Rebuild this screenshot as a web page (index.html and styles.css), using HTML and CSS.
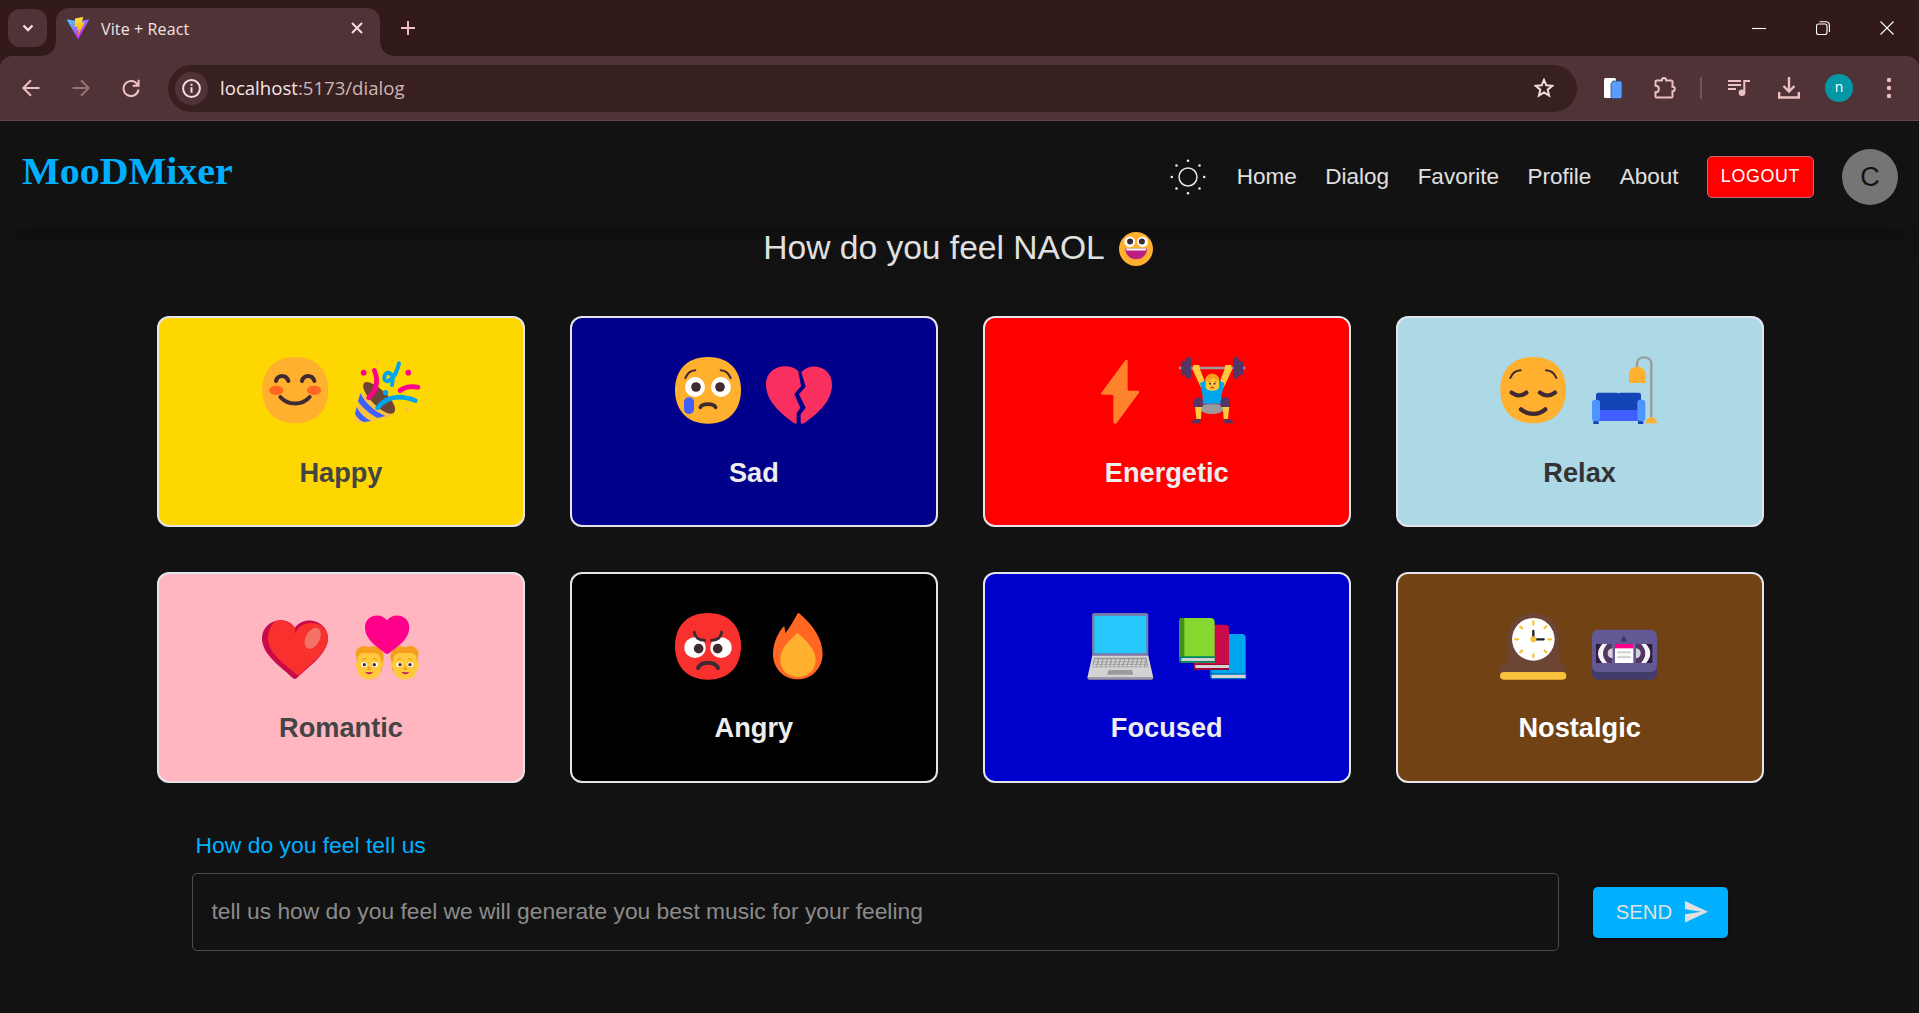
FILE: index.html
```html
<!DOCTYPE html>
<html lang="en">
<head>
<meta charset="utf-8">
<title>Vite + React</title>
<link rel="stylesheet" href="styles.css">
</head>
<body>
<div class="tabstrip">
  <button class="tab-search" aria-label="Search tabs"><svg width="12" height="8" viewBox="0 0 12 8"><path d="M1.5 1.5 6 6l4.500-4.500" class="ln light thick"/></svg></button>
  <div class="tab">
    <svg class="favicon" width="22" height="22" viewBox="0 0 256 257">
      <defs>
        <linearGradient id="va" x1="-.8%" x2="57.600%" y1="7.700%" y2="78.400%"><stop offset="0" stop-color="#41d1ff"/><stop offset="1" stop-color="#bd34fe"/></linearGradient>
        <linearGradient id="vb" x1="43.400%" x2="50.300%" y1="2.200%" y2="89%"><stop offset="0" stop-color="#ffea83"/><stop offset=".08" stop-color="#ffdd35"/><stop offset="1" stop-color="#ffa800"/></linearGradient>
      </defs>
      <path fill="url(#va)" d="M255.153 37.938 134.897 252.976c-2.483 4.440-8.862 4.466-11.382.048L.875 37.958c-2.746-4.814 1.371-10.646 6.827-9.670l120.385 21.517a6.537 6.537 0 0 0 2.322-.004l117.867-21.483c5.438-.991 9.574 4.796 6.877 9.620Z"/>
      <path fill="url(#vb)" d="M185.432.063 96.440 17.501a3.268 3.268 0 0 0-2.634 3.014l-5.474 92.456a3.268 3.268 0 0 0 3.997 3.378l24.777-5.718c2.318-.535 4.413 1.507 3.936 3.838l-7.361 36.047c-.495 2.426 1.782 4.500 4.151 3.780l15.304-4.649c2.372-.72 4.652 1.360 4.150 3.788l-11.698 56.621c-.732 3.542 3.979 5.473 5.943 2.437l1.313-2.028 72.516-144.720c1.215-2.423-.88-5.186-3.540-4.672l-25.505 4.922c-2.396.462-4.435-1.770-3.759-4.114l16.646-57.705c.677-2.350-1.370-4.583-3.769-4.113Z"/>
    </svg>
    <span class="tab-title">Vite + React</span>
    <svg class="tab-close" width="12" height="12" viewBox="0 0 12 12"><path d="M1 1l10 10M11 1 1 11" class="ln light"/></svg>
  </div>
  <svg class="new-tab" width="16" height="16" viewBox="0 0 16 16"><path d="M8 1v14M1 8h14" class="ln pink"/></svg>
  <div class="window-controls">
    <svg width="14" height="14" viewBox="0 0 14 14"><path d="M0 7.500h14" class="ln hair"/></svg>
    <svg width="14" height="14" viewBox="0 0 14 14"><rect x=".5" y="3" width="10.500" height="10.500" rx="2" class="ln hair"/><path d="M3.500.7H10a3.400 3.400 0 0 1 3.400 3.400V11" class="ln hair"/></svg>
    <svg width="14" height="14" viewBox="0 0 14 14"><path d="M.5.5l13 13M13.500.5l-13 13" class="ln hair"/></svg>
  </div>
</div>

<div class="toolbar">
  <div class="slot"><svg width="18" height="18" viewBox="0 0 18 18"><path d="M17.500 9H1.500M9 1.300 1.300 9 9 16.700" class="ln pink"/></svg></div>
  <div class="slot dim"><svg width="18" height="18" viewBox="0 0 18 18"><path d="M.5 9h16M9 1.300 16.700 9 9 16.700" class="ln pink"/></svg></div>
  <div class="slot"><svg width="18" height="18" viewBox="0 0 18 18"><path d="M15.700 6A7.500 7.500 0 1 0 16.500 10.500M16.600.8V6.700H10.700" class="ln pink"/></svg></div>
  <div class="omnibox">
    <div class="site-info"><svg width="19" height="19" viewBox="0 0 19 19"><circle cx="9.500" cy="9.500" r="8.400" class="ln light"/><path d="M9.500 8.300v5.500M9.500 4.800v2" class="ln light"/></svg></div>
    <div class="url">localhost<span>:5173/dialog</span></div>
    <svg class="star" width="20" height="20" viewBox="0 0 20 20"><path d="M10 1.800l2.300 5.500 6 .5-4.600 3.900 1.400 5.900L10 14.500l-5.100 3.100 1.400-5.900-4.600-3.900 6-.5z" class="ln light"/></svg>
  </div>
  <div class="slot"><svg width="20" height="22" viewBox="0 0 20 22"><rect x="1" y="1" width="12" height="20" rx="1.500" fill="#fff"/><path d="M8 6.500 10 4h8l1 1.500V20l-1 1.500H9L8 20z" fill="#5c9dfb" stroke="#2b4a7c" stroke-width=".8"/></svg></div>
  <div class="slot"><svg class="puzzle" width="24" height="24" viewBox="0 0 24 24"><path d="M3.500 4.500h5.300c0-3.500 4.400-3.500 4.400 0h5.300q1 0 1 1v5.300c3 0 3 4.400 0 4.400v5.300q0 1-1 1h-15q-1 0-1-1v-4.300c4.500 0 4.500-6.400 0-6.400V5.500q0-1 1-1z" class="ln pink"/></svg></div>
  <div class="divider"></div>
  <div class="slot"><svg width="22" height="18" viewBox="0 0 22 18"><path d="M0 2h13M0 6h13M0 10h8" class="ln pink"/><circle cx="14" cy="13.800" r="3.300" fill="#edc1c2"/><path d="M16.300 14V2H22" class="ln pink"/></svg></div>
  <div class="slot"><svg width="22" height="24" viewBox="0 0 22 24"><path d="M11 1v14M5.500 10l5.500 5.500 5.500-5.500M1.200 16v5.500h19.600V16" class="ln pink thick"/></svg></div>
  <div class="slot"><span class="account">n</span></div>
  <div class="slot"><svg width="6" height="22" viewBox="0 0 6 22"><g fill="#edc1c2"><circle cx="3" cy="3" r="2.200"/><circle cx="3" cy="11" r="2.200"/><circle cx="3" cy="19" r="2.200"/></g></svg></div>
</div>

<div class="app">
  <header class="header">
    <div class="brand">MooDMixer</div>
    <nav class="nav">
      <svg width="36" height="36" viewBox="0 0 36 36"><circle cx="18" cy="18" r="9" fill="none" stroke="#e8e8e8" stroke-width="1.500"/><g fill="#e8e8e8"><circle cx="18" cy="1.800" r="1.300"/><circle cx="18" cy="34.200" r="1.300"/><circle cx="1.800" cy="18" r="1.300"/><circle cx="34.200" cy="18" r="1.300"/><circle cx="6.500" cy="6.500" r="1.300"/><circle cx="29.500" cy="6.500" r="1.300"/><circle cx="6.500" cy="29.500" r="1.300"/><circle cx="29.500" cy="29.500" r="1.300"/></g></svg>
      <a>Home</a><a>Dialog</a><a>Favorite</a><a>Profile</a><a>About</a>
      <button class="logout">LOGOUT</button>
      <div class="avatar">C</div>
    </nav>
  </header>

  <h1 class="question">How do you feel NAOL
    <svg width="34" height="34" viewBox="1134 65 101 101"><circle cx="1184.500" cy="115.500" r="50.500" fill="#ffb02e"/><circle cx="1166" cy="94" r="16" fill="#fff"/><circle cx="1204" cy="94" r="16" fill="#fff"/><circle cx="1167" cy="93" r="9" fill="#402a32"/><circle cx="1202" cy="93" r="9" fill="#402a32"/><path d="M1153 114h64c0 43-64 43-64 0z" fill="#bb1d80"/><path d="M1155 114h60l-2 6h-56z" fill="#fff"/></svg>
  </h1>

  <main class="moods">
    <article class="card happy">
      <div class="emojis">
        <svg viewBox="335 141 200 200"><path d="M435 141c69 0 99 46 99 99s-30 100-99 100-99-47-99-100 30-99 99-99z" fill="#ffb02e"/><ellipse cx="378" cy="241" rx="21.500" ry="14" fill="#ff6723"/><ellipse cx="491" cy="241" rx="21.500" ry="14" fill="#ff6723"/><path d="M377 213c5-20 31-20 37 0M455 213c5-20 31-20 37 0M390 261c22 26 66 26 88 0" class="feature w12"/></svg>
        <svg viewBox="611 141 200 200"><path d="M633 245 613 320c-4 14 4 21 20 19l97-22z" fill="#f9c23c"/><path d="M630 250c16 30 43 55 75 68l-23 6c-25-12-47-32-59-50zM619 291c11 20 26 35 44 42l-22 3c-12-4-22-15-27-25z" fill="#3f5fff"/><path d="M642 218c22-15 113 65 88 91-24 18-110-68-88-91z" fill="#6d4534"/><g fill="none" stroke-width="14" stroke-linecap="round"><path d="M672 181c13 31 7 59-17 82" stroke="#ff008b"/><path d="M749 242c15-12 33-15 54-10" stroke="#ff008b"/><path d="M682 293c28-34 68-39 113-21" stroke="#00a6ed"/><path d="M746 160c-8 34-18 50-36 54-15-2-8-29 7-25 14 6 11 24 8 36" stroke="#00a6ed" stroke-width="12"/></g><circle cx="640" cy="188" r="8.500" fill="#ff008b"/><circle cx="774" cy="188" r="8.500" fill="#ff008b"/><circle cx="706" cy="248" r="8" fill="#00a6ed"/><circle cx="679" cy="156" r="6.500" fill="#f9c23c"/><circle cx="771" cy="300" r="6.500" fill="#f9c23c"/></svg>
      </div>
      <h2>Happy</h2>
    </article>
    <article class="card sad">
      <div class="emojis">
        <svg viewBox="345 141 200 200"><path d="M444 141c69 0 99 46 99 99s-30 101-99 101-99-48-99-101 30-99 99-99z" fill="#ffb02e"/><circle cx="405" cy="231" r="30" fill="#fff"/><circle cx="483" cy="231" r="30" fill="#fff"/><circle cx="408" cy="231" r="14.500" fill="#402a32"/><circle cx="480" cy="231" r="14.500" fill="#402a32"/><path d="M376 204c6-14 17-22 30-23M512 204c-6-14-17-22-30-23" class="feature w6"/><path d="M421 292c7-13 39-13 46 0" class="feature w11"/><rect x="372" y="262" width="30" height="50" rx="14" fill="#3f5fff"/></svg>
        <svg viewBox="621 141 200 200"><path d="M718 184c-26-28-97-18-97 40 0 52 50 90 84 115 5 4 8 2 8-3v-26l11-17-18-41 20-23z" fill="#f92f60"/><path d="M727 187c26-32 92-19 92 37 0 52-49 91-83 115-6 4-11 2-11-4v-22l15-20-20-40 20-23z" fill="#f92f60"/></svg>
      </div>
      <h2>Sad</h2>
    </article>
    <article class="card energetic">
      <div class="emojis">
        <svg viewBox="338 141 200 200"><path d="M452 152c3-4 8-3 8 2v83c0 3 2 5 5 5h27c3 0 4 3 2 6l-67 91c-3 4-10 3-10-2v-78c0-3-2-5-5-5h-28c-4 0-4-4-2-7z" fill="#ff822d"/></svg>
        <svg viewBox="614 141 200 200"><path d="M614 174h199" stroke="#9b9b9b" stroke-width="7"/><g fill="#533566"><rect x="621" y="153" width="20" height="43" rx="7"/><rect x="635" y="141" width="16" height="65" rx="7"/><rect x="777" y="141" width="16" height="65" rx="7"/><rect x="787" y="153" width="20" height="43" rx="7"/></g><ellipse cx="713" cy="296" rx="35" ry="16" fill="#9b9b9b"/><path d="M655 179l2-14h18l3 15 13 33 1 20h-12zM773 179l-2-14h-18l-3 15-13 33-1 20h12z" fill="#ffc83d"/><path d="M677 220l14-8 8 9h31l7-9 13 8-8 36v26h-57v-26z" fill="#00a6ed"/><path d="M691 282h46" stroke="#8c5a9a" stroke-width="3"/><path d="M694 218c-3-34 43-34 40 0v15c-5 12-35 12-40 0z" fill="#ffc83d"/><path d="M693 212c0-27 42-28 42 0-10-1-14-6-17-8-6 5-14 9-25 8z" fill="#f59f1c"/><path d="M662 288h20l-2 39h-14zM745 288h20l-4 39h-13z" fill="#ffc83d"/><path d="M658 291v-15c2-18 25-17 27-3v18zM739 291v-18c2-15 25-16 28 2v16zM651 340c0-8 9-13 27-13v13zM777 340c0-8-9-13-27-13v13z" fill="#533566"/><circle cx="707" cy="221" r="3" fill="#402a32"/><circle cx="721" cy="221" r="3" fill="#402a32"/><path d="M708 233h12" stroke="#c83b20" stroke-width="3.500"/><path d="M711 228h6M700 215h8M720 215h8" stroke="#d67d00" stroke-width="2.500"/></svg>
      </div>
      <h2>Energetic</h2>
    </article>
    <article class="card relax">
      <div class="emojis">
        <svg viewBox="348 141 200 200"><path d="M448 141c69 0 98 46 98 99s-29 100-98 100-99-47-99-100 30-99 99-99z" fill="#ffb02e"/><path d="M379 204c5-13 16-22 31-23M517 204c-5-13-16-22-31-23" class="feature w6"/><path d="M383 248c14 11 31 11 44 0M468 248c14 11 31 11 45 0" class="feature w13"/><path d="M411 298c21 18 53 18 73 0" class="feature w13"/></svg>
        <svg viewBox="624 141 200 200"><path d="M759 174v-14c0-24 43-24 43 0v165" fill="none" stroke="#9b9b9b" stroke-width="7"/><path d="M735 219v-24c0-33 50-33 50 0v24zM785 340c2-24 31-24 34 0z" fill="#ffb02e"/><rect x="636" y="248" width="69" height="62" rx="7" fill="#1345b7"/><rect x="702" y="248" width="69" height="62" rx="7" fill="#1345b7"/><path d="M628 329h16v13h-16zM762 329h16v13h-16z" fill="#1345b7"/><path d="M642 300h124v33H642z" fill="#3f5fff"/><rect x="624" y="269" width="24" height="65" rx="9" fill="#4f94ff"/><rect x="760" y="269" width="24" height="65" rx="9" fill="#4f94ff"/></svg>
      </div>
      <h2>Relax</h2>
    </article>
    <article class="card romantic">
      <div class="emojis">
        <svg viewBox="335 144 200 200"><path d="M434 188c28-40 99-22 99 32 0 48-62 88-93 119-4 4-9 4-13 0-32-31-92-68-92-119 0-54 71-74 99-32z" fill="#ca0b4a"/><path d="M434 208c13-48 99-46 99 12 0 44-57 78-88 113-34-29-92-66-92-113 0-20 8-44 27-53 23-2 41 5 54 21z" fill="#f8312f"/><ellipse cx="487" cy="220" rx="21" ry="34" transform="rotate(28 487 220)" fill="#f37366"/></svg>
        <svg viewBox="611 144 200 200"><g id="lover"><path d="M618 275c-9-22 18-40 37-28 24-11 56 11 42 44l-3 29h-71z" fill="#f59f1c"/><circle cx="622" cy="300" r="8" fill="#ffc83d"/><circle cx="692" cy="300" r="8" fill="#ffc83d"/><path d="M621 290c0-28 16-29 37-25 20-3 34 1 34 25v22c0 20-14 31-35 31s-36-11-36-31z" fill="#ffc83d"/><ellipse cx="641" cy="299" rx="9" ry="7" fill="#fff"/><ellipse cx="674" cy="299" rx="9" ry="7" fill="#fff"/><circle cx="642" cy="299" r="5" fill="#402a32"/><circle cx="672" cy="299" r="5" fill="#402a32"/><path d="M635 286c5-5 9-5 13-4M668 282c5-2 9-1 12 4" fill="none" stroke="#e59500" stroke-width="3"/><path d="M656 302l-7 13h14z" fill="#f59f1c"/><path d="M643 320q13 4 26 0-13 15-26 0z" fill="#bb1d50"/></g><use href="#lover" transform="matrix(-1 0 0 1 1421 0)"/><path d="M710 166c-20-26-66-15-66 21 0 36 35 58 60 77 5 4 8 4 13 0 25-19 60-41 60-77 0-36-47-47-67-21z" fill="#ff008b"/></svg>
      </div>
      <h2>Romantic</h2>
    </article>
    <article class="card angry">
      <div class="emojis">
        <svg viewBox="345 144 200 200"><path d="M444 144c69 0 99 46 99 100s-30 100-99 100-99-46-99-100 30-100 99-100z" fill="#f8312f"/><ellipse cx="405" cy="248" rx="32" ry="31" fill="#fff"/><ellipse cx="483" cy="248" rx="32" ry="31" fill="#fff"/><path d="M403 198v7c4 15 16 23 32 24l9 10 9-10c16-1 28-9 32-24v-7z" fill="#f8312f"/><circle cx="416" cy="251" r="14.500" fill="#402a32"/><circle cx="473" cy="251" r="14.500" fill="#402a32"/><path d="M403 202c2 15 15 24 31 24M485 202c-2 15-14 24-30 24" class="feature w9"/><path d="M414 309c10-21 50-21 60 0" class="feature w12"/></svg>
        <svg viewBox="621 144 200 200"><path d="M642 267c0-34 16-65 31-82 2-2 4 0 4 3l2 17c12-16 25-38 36-58 2-4 4-4 7-1 39 33 69 75 69 120 0 41-31 77-75 77s-74-35-74-76z" fill="#ff6723"/><path d="M664 284c0-37 29-58 51-81 25 21 55 49 55 82 0 68-106 68-106-1z" fill="#ffb02e"/></svg>
      </div>
      <h2>Angry</h2>
    </article>
    <article class="card focused">
      <div class="emojis">
        <svg viewBox="338 144 200 200"><rect x="353" y="144" width="169" height="140" rx="7" fill="#7d74a8"/><path d="M360 152h156v113H360z" fill="#26c9fc"/><path d="M354 272h168l15 66H339z" fill="#d3d3d3"/><path d="M339 337h198c0 5-2 7-6 7H345c-4 0-6-2-6-7z" fill="#9b9b9b"/><path d="M359 278h158l5 29H354z" fill="#9b9b9b"/><path d="M361 286h154M359 294h158M357 302h162" stroke="#dedede" stroke-width="5" stroke-dasharray="9 4"/><path d="M403 315h70l4 14h-78z" fill="#9b9b9b"/></svg>
        <svg viewBox="614 144 200 200"><path d="M708 215q0-8 8-8h87q11 0 11 11v123h-98q-8 0-8-8z" fill="#00a6ed"/><path d="M708 314q3 9 15 11h91v18h-98q-8 0-8-8z" fill="#0074ba"/><path d="M712 329h102v10H712z" fill="#d3d3d3"/><path d="M658 187q0-8 8-8h86q12 0 12 12v124H666q-8 0-8-8z" fill="#ca0b4a"/><path d="M658 297h106v18H664q-6-1-6-6z" fill="#990838"/><path d="M663 300h101v9H663z" fill="#d3d3d3"/><path d="M615 167q0-8 8-8h85q13 0 13 13v121H623q-8 0-8-8z" fill="#86d72f"/><path d="M615 167q0-8 8-8h7v116h-15z" fill="#44911b"/><path d="M615 274h106v19H622q-7-1-7-8z" fill="#008463"/><path d="M621 279h100v9H621z" fill="#d3d3d3"/></svg>
      </div>
      <h2>Focused</h2>
    </article>
    <article class="card nostalgic">
      <div class="emojis">
        <svg viewBox="348 144 200 200"><path d="M371 222c0-104 155-104 155 0v69c0 8 21 8 21 17v19H348v-19c0-9 23-9 23-17z" fill="#6d4534"/><rect x="348" y="321" width="199" height="23" rx="11.500" fill="#f9c23c"/><circle cx="448" cy="223" r="64" fill="#fff"/><g stroke="#f9c23c" stroke-width="7" stroke-linecap="round"><path d="M448 170v8M448 268v8M394 223h8M493 223h8M409 185l5 5M482 257l5 5M409 262l5-5M482 189l5-5"/></g><path d="M448 198v25h31" fill="none" stroke="#212121" stroke-width="7" stroke-linecap="round"/><circle cx="448" cy="223" r="9" fill="#f9c23c"/></svg>
        <svg viewBox="624 144 200 200"><rect x="624" y="212" width="195" height="132" rx="18" fill="#433b6b"/><rect x="624" y="194" width="195" height="127" rx="18" fill="#635994"/><path d="M719 212q4 0 11 18h-20q5-18 9-18z" fill="#433b6b"/><path d="M636 237h50v57h-50zM756 237h49v57h-49z" fill="#321b41"/><path d="M655 237h31v57h-31q-26-28 0-57zM756 237h30q26 28 0 57h-30z" fill="#f4f4f4"/><path d="M670 237h16v57h-16q-26-28 0-57zM756 237h15q26 28 0 57h-15z" fill="#533566"/><path d="M686 250q-15 2-15 15t15 15zM756 250q14 2 14 15t-14 15z" fill="#d3d3d3"/><path d="M693 237h55v57h-55z" fill="#fff"/><path d="M693 237h55v13h-55z" fill="#ff008b"/><path d="M702 262h36M702 276h36" stroke="#d3d3d3" stroke-width="7" stroke-linecap="round"/></svg>
      </div>
      <h2>Nostalgic</h2>
    </article>
  </main>

  <form class="feeling">
    <label>How do you feel tell us</label>
    <div class="row">
      <div class="field">tell us how do you feel we will generate you best music for your feeling</div>
      <button class="send" type="button">SEND<svg width="23" height="21.500" viewBox="2 3 21 18" preserveAspectRatio="none"><path d="M2.010 21 23 12 2.010 3 2 10l15 2-15 2z" fill="#e0e0e0"/></svg></button>
    </div>
  </form>
</div>
</body>
</html>
```
FILE: styles.css
```css
* { box-sizing: border-box; }

body {
  margin: 0;
  height: 1013px;
  overflow: hidden;
  display: flex;
  flex-direction: column;
  background: #121212;
  color: #e0e0e0;
  font-family: "Liberation Sans", Arial, sans-serif;
}

svg { display: block; flex: none; }
button { font-family: inherit; padding: 0; border: 0; }

.ln { fill: none; stroke-width: 2; }
.light { stroke: #f0dede; }
.pink { stroke: #edc1c2; }
.hair { stroke: #fff; stroke-width: 1.1; }
.thick { stroke-width: 2.4; }

/* Browser chrome */
.tabstrip {
  height: 56px;
  flex: none;
  display: flex;
  background: #321a1b;
  font-family: "Open Sans", "Noto Sans", sans-serif;
}

.tab-search {
  width: 39px;
  height: 38px;
  margin: 9px 9px 0 8px;
  border-radius: 12px;
  background: #503336;
  display: grid;
  place-items: center;
}

.tab {
  position: relative;
  width: 324px;
  height: 48px;
  margin-top: 8px;
  padding: 0 17px 8px 11px;
  display: flex;
  align-items: center;
  background: #503336;
  border-radius: 13px 13px 0 0;
}

.tab::before,
.tab::after {
  content: "";
  position: absolute;
  bottom: 0;
  width: 14px;
  height: 14px;
}
.tab::before { right: 100%; background: radial-gradient(circle at 0 0, transparent 13.5px, #503336 14px); }
.tab::after { left: 100%; background: radial-gradient(circle at 100% 0, transparent 13.5px, #503336 14px); }

.tab-title {
  margin-left: 12px;
  padding-top: 2px;
  flex: 1;
  font-size: 16px;
  letter-spacing: .12px;
  color: #f3e3e3;
}

.new-tab { margin: 20px 0 0 19.5px; }

.window-controls {
  margin: 21px 25px 0 auto;
  display: flex;
  gap: 50px;
}

.toolbar {
  height: 65px;
  flex: none;
  display: flex;
  align-items: center;
  padding: 0 5px 0 6px;
  background: #503336;
  border-bottom: 1px solid #64494b;
  border-radius: 12px 12px 0 0;
  box-shadow: 0 -12px 0 0 #321a1b;
  clip-path: inset(0);
  font-family: "Open Sans", "Noto Sans", sans-serif;
}

.slot {
  width: 50px;
  height: 40px;
  flex: none;
  display: grid;
  place-items: center;
}

.dim { opacity: .45; }
.puzzle { margin-left: 3px; }

.omnibox {
  flex: 1;
  height: 47px;
  margin: 0 11px 0 12px;
  padding: 0 23px 0 7px;
  display: flex;
  align-items: center;
  border-radius: 24px;
  background: #382021;
}

.site-info {
  width: 33px;
  height: 33px;
  border-radius: 50%;
  background: #503336;
  display: grid;
  place-items: center;
}

.url {
  flex: 1;
  margin-left: 12px;
  padding-bottom: 2px;
  font-size: 18.6px;
  color: #f6e6e6;
}
.url span { color: #ccb6b6; }

.divider { width: 2px; height: 22px; margin: 0 12px; background: #775557; }

.account {
  width: 28px;
  height: 28px;
  border-radius: 50%;
  background: #0097a7;
  color: #fff;
  font-size: 14px;
  line-height: 26px;
  text-align: center;
}

/* Page */
.app { flex: 1; }

.header {
  height: 106px;
  padding: 28px 21px 22px 22px;
  display: flex;
  justify-content: space-between;
  box-shadow: 0 20px 30px -12px rgba(0, 0, 0, .2);
}

.brand {
  font: bold 37px/45px "Liberation Serif", Georgia, serif;
  color: #00b0ff;
  transform: scaleX(1.08);
  transform-origin: 0 0;
}

.nav {
  display: flex;
  align-items: center;
  height: 56px;
  gap: 28px;
  font-size: 22.5px;
}

.nav > svg { margin-right: 3px; }
.nav a { margin-right: .5px; }

.logout {
  width: 107px;
  height: 42px;
  padding-bottom: 2px;
  border: 1px solid #c76a7e;
  border-radius: 5px;
  background: #f00;
  color: #fff;
  font-size: 17.8px;
  letter-spacing: .7px;
}

.avatar {
  width: 56px;
  height: 56px;
  border-radius: 50%;
  background: #757575;
  color: #121212;
  font-size: 27px;
  line-height: 56px;
  text-align: center;
}

.question {
  height: 54px;
  margin: 0;
  display: flex;
  justify-content: center;
  align-items: center;
  gap: 14px;
  padding-right: 3px;
  padding-bottom: 12px;
  font-size: 33.6px;
  font-weight: 400;
}

.question svg { margin-top: 2px; }

.moods {
  width: 1606.6px;
  margin: 35px 0 0 157px;
  display: grid;
  grid-template-columns: repeat(4, 1fr);
  gap: 45px;
}

.card {
  height: 211px;
  padding-top: 39px;
  border: 2px solid #e4e4ea;
  border-radius: 12px;
}

.emojis {
  display: flex;
  justify-content: center;
  gap: 25.3px;
}
.emojis svg { width: 66.67px; height: 66.67px; overflow: visible; }

.card h2 {
  margin: 29px 0 0;
  font-size: 27.2px;
  line-height: 40px;
  text-align: center;
}
.card:nth-child(n + 5) h2 { margin-top: 28px; }

.feature { fill: none; stroke: #402a32; stroke-linecap: round; }
.w6 { stroke-width: 6px; }
.w9 { stroke-width: 9px; }
.w11 { stroke-width: 11px; }
.w12 { stroke-width: 12px; }
.w13 { stroke-width: 13px; }

.happy { background: #ffd700; color: #444; }
.sad { background: #00008b; color: #eee; }
.energetic { background: #f00; color: #eee; }
.relax { background: #add8e6; color: #333; }
.romantic { background: #ffb6c1; color: #444; }
.angry { background: #000; color: #eee; }
.focused { background: #00c; color: #eee; }
.nostalgic { background: #704214; color: #fff; }

.feeling { margin: 47px 191px 0 192px; }

.feeling label {
  display: block;
  margin-left: 3.5px;
  font-size: 22.9px;
  line-height: 30px;
  color: #00b0ff;
}

.row { display: flex; align-items: center; gap: 34px; margin-top: 13px; }

.field {
  width: 1367px;
  height: 78px;
  padding-left: 18.5px;
  border: 1px solid #4a4a4a;
  border-radius: 5px;
  font-size: 22.82px;
  line-height: 75px;
  color: #8b8b8b;
}

.send {
  width: 135px;
  height: 51px;
  display: flex;
  align-items: center;
  justify-content: center;
  gap: 13px;
  padding-left: 3px;
  border-radius: 5px;
  background: #00b0ff;
  color: #e0e0e0;
  font-size: 20.3px;
  box-shadow: 0 3px 4px rgba(0, 0, 0, .4);
}
```
